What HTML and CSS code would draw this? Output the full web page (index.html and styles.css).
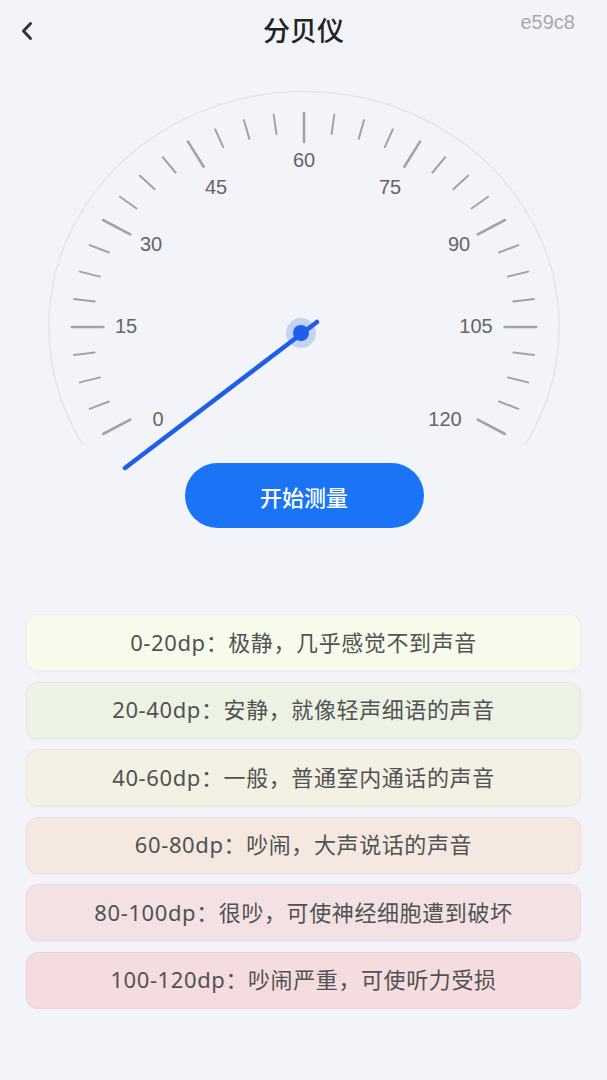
FILE: index.html
```html
<!DOCTYPE html>
<html lang="zh-CN">
  <head>
    <meta charset="UTF-8" />
    <meta name="viewport" content="width=device-width, initial-scale=1.0" />
    <title>分贝仪</title>
    <link rel="stylesheet" href="styles.css">
  </head>
  <body>
    <div class="header">
      <div class="back">
        <svg width="14" height="20" viewBox="0 0 14 20">
          <path d="M10.5 2.5 L3.5 10 L10.5 17.5" fill="none" stroke="#333" stroke-width="3" stroke-linecap="round" stroke-linejoin="round" />
        </svg>
      </div>
      <h1 class="title">分贝仪</h1>
      <div class="code">e59c8</div>
    </div>

    <div class="gauge">
      <svg id="dial" width="607" height="403" viewBox="0 60 607 403">
        <path id="rim" fill="none" stroke="#e4e5eb" stroke-width="1.5" />
        <g id="ticks" stroke="#a3a3a6" stroke-linecap="round"></g>
        <g id="labels" class="dial-label"></g>
        <line x1="317" y1="322" x2="125" y2="468" stroke="#1d5fe8" stroke-width="4.5" stroke-linecap="round" />
        <circle cx="301" cy="333" r="15" fill="rgba(29, 95, 232, 0.22)" />
        <circle cx="301" cy="333" r="8" fill="#1d5fe8" />
      </svg>
    </div>

    <div class="actions">
      <button class="start">开始测量</button>
    </div>

    <div class="levels">
      <div class="level lv1">0-20dp：极静，几乎感觉不到声音</div>
      <div class="level lv2">20-40dp：安静，就像轻声细语的声音</div>
      <div class="level lv3">40-60dp：一般，普通室内通话的声音</div>
      <div class="level lv4">60-80dp：吵闹，大声说话的声音</div>
      <div class="level lv5">80-100dp：很吵，可使神经细胞遭到破坏</div>
      <div class="level lv6">100-120dp：吵闹严重，可使听力受损</div>
    </div>

    <script>
      // dial: 0..120 over 240 degrees, drawn a little wider than tall
      const cx = 304;
      const cy = 327;
      const sx = 232;
      const sy = 214;
      const ns = "http://www.w3.org/2000/svg";

      function point(v, r) {
        let a = ((210 - 2 * v) * Math.PI) / 180;
        return [cx + r * sx * Math.cos(a), cy - r * sy * Math.sin(a)];
      }

      let start = point(0, 1.1);
      let end = point(120, 1.1);
      document
        .getElementById("rim")
        .setAttribute(
          "d",
          `M${start[0]} ${start[1]} A${sx * 1.1} ${sy * 1.1} 0 1 1 ${end[0]} ${end[1]}`
        );

      let ticks = document.getElementById("ticks");
      for (let i = 0; i <= 32; i++) {
        let v = i * 3.75;
        let major = i % 4 === 0;
        let p1 = point(v, 1);
        let p2 = point(v, major ? 0.865 : 0.91);
        let line = document.createElementNS(ns, "line");
        line.setAttribute("x1", p1[0]);
        line.setAttribute("y1", p1[1]);
        line.setAttribute("x2", p2[0]);
        line.setAttribute("y2", p2[1]);
        line.setAttribute("stroke-width", major ? 2.6 : 2);
        ticks.appendChild(line);
      }

      let labels = [
        [0, 158, 419],
        [15, 126, 326],
        [30, 151, 244],
        [45, 216, 187],
        [60, 304, 160],
        [75, 390, 187],
        [90, 459, 244],
        [105, 476, 326],
        [120, 445, 419],
      ];
      let group = document.getElementById("labels");
      labels.forEach(([v, x, y]) => {
        let t = document.createElementNS(ns, "text");
        t.setAttribute("x", x);
        t.setAttribute("y", y + 7);
        t.setAttribute("text-anchor", "middle");
        t.textContent = v;
        group.appendChild(t);
      });
    </script>
  </body>
</html>
```

FILE: styles.css
```css
body {
  margin: 0;
  background-color: #f3f4f9;
  font-family: "Liberation Sans", "Noto Sans CJK SC", sans-serif;
  color: #333;
}
.header {
  display: grid;
  grid-template-columns: 1fr auto 1fr;
  align-items: center;
  height: 60px;
}
.back {
  padding-left: 20px;
  display: flex;
  align-items: center;
  padding-top: 1px;
}
.title {
  margin: 0;
  font-family: "Noto Sans CJK SC", sans-serif;
  font-size: 27px;
  font-weight: 500;
  color: #222;
  line-height: 60px;
}
.code {
  justify-self: end;
  align-self: start;
  padding-right: 32px;
  padding-top: 11px;
  font-size: 20px;
  color: #a9a9ab;
}
.gauge {
  height: 403px;
}
#dial {
  display: block;
  overflow: visible;
}
.dial-label {
  font-family: "Liberation Sans", sans-serif;
  font-size: 20px;
  fill: #666;
}
.actions {
  display: flex;
  justify-content: center;
  padding-left: 1px;
}
.start {
  width: 239px;
  height: 65px;
  border: none;
  border-radius: 33px;
  background-color: #1b74f6;
  color: white;
  font-family: "Noto Sans CJK SC", sans-serif;
  font-size: 22px;
  font-weight: 500;
  cursor: pointer;
}
.levels {
  display: flex;
  flex-direction: column;
  gap: 10.6px;
  padding: 86px 26px 0 26px;
}
.level {
  height: 57px;
  display: flex;
  align-items: center;
  justify-content: center;
  padding-bottom: 4px;
  border-radius: 12px;
  border: 1px solid rgba(0, 0, 0, 0.035);
  box-shadow: 0 1px 3px rgba(0, 0, 0, 0.04);
  box-sizing: border-box;
  font-family: "Noto Sans", "Noto Sans CJK SC", sans-serif;
  font-size: 22px;
  letter-spacing: 0.6px;
  color: #525252;
}
.lv1 {
  background-color: #f6fbec;
}
.lv2 {
  background-color: #ecf3e4;
}
.lv3 {
  background-color: #f3f1e4;
}
.lv4 {
  background-color: #f4e8e0;
}
.lv5 {
  background-color: #f4e1e3;
}
.lv6 {
  background-color: #f4dcdf;
}
```
